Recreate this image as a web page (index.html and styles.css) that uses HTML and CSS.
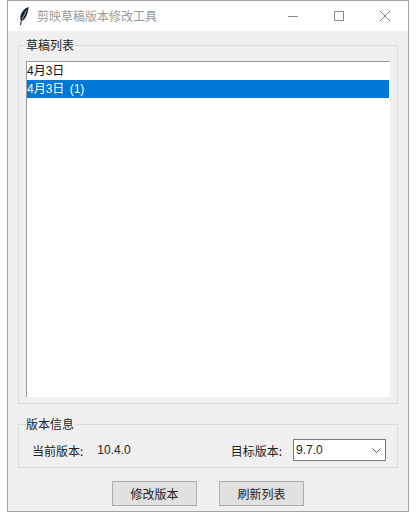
FILE: index.html
```html
<!DOCTYPE html>
<html lang="zh-CN">
<head>
<meta charset="UTF-8" />
<title>剪映草稿版本修改工具</title>
<link rel="stylesheet" href="styles.css">
</head>
<body>
  <div class="window">
    <!-- Title bar -->
    <div class="titlebar">
      <svg class="feather" width="10" height="20" viewBox="0 0 10 20">
        <path d="M9.500 1 C6 2 2.500 5.500 1.500 10 C1.200 11.500 1.200 13 1.800 14.300 L1 19 L2 19.200 L2.800 14.800 C5 14.500 7 11.500 8.200 8 C9 5.500 9.600 3 9.500 1 Z" fill="#1c2530"/>
        <path d="M7.500 4.500 L3 13.500" stroke="#8fa3b8" stroke-width="1" fill="none"/>
      </svg>
      <span class="title">剪映草稿版本修改工具</span>
      <div class="controls">
        <svg width="46" height="31" viewBox="0 0 46 31"><path d="M18 15.500 H28" stroke="#8a8a8a"/></svg>
        <svg width="46" height="31" viewBox="0 0 46 31"><rect x="18.500" y="10.500" width="9" height="9" fill="none" stroke="#8a8a8a"/></svg>
        <svg width="46" height="31" viewBox="0 0 46 31"><path d="M18 10 L28 20 M28 10 L18 20" stroke="#8a8a8a" fill="none"/></svg>
      </div>
    </div>

    <div class="content">
      <!-- Draft list -->
      <fieldset class="group group-list">
        <legend>草稿列表</legend>
        <div class="listbox">
          <div class="row">4月3日</div>
          <div class="row selected">4月3日 (1)</div>
        </div>
      </fieldset>

      <!-- Version info -->
      <fieldset class="group group-info">
        <legend>版本信息</legend>
        <div class="info-row">
          <span class="label">当前版本:</span>
          <span class="current">10.4.0</span>
          <span class="label target">目标版本:</span>
          <div class="combo">
            <span>9.7.0</span>
            <svg width="9" height="5" viewBox="0 0 9 5"><path d="M0.500 0.500 L4.500 4.500 L8.500 0.500" stroke="#555" fill="none"/></svg>
          </div>
        </div>
      </fieldset>

      <div class="buttons">
        <button class="btn">修改版本</button>
        <button class="btn">刷新列表</button>
      </div>
    </div>
  </div>
</body>
</html>
```

FILE: styles.css
```css
* {
  margin: 0;
  padding: 0;
  box-sizing: border-box;
}
body {
  background: #fff;
  font-family: "Noto Sans CJK SC", "Liberation Sans", sans-serif;
  font-size: 12px;
  color: #222;
  padding: 0 7px;
  height: 519px;
  overflow: hidden;
}
.window {
  width: 402px;
  height: 512px;
  border: 1px solid #a3a3a3;
  background: #f0f0f0;
}

/* Title bar */
.titlebar {
  display: flex;
  align-items: center;
  height: 30px;
  background: #fff;
  padding-left: 11px;
}
.feather {
  flex: none;
}
.title {
  margin-left: 8px;
  margin-bottom: 1px;
  color: #9a9a9a;
  font-size: 12px;
}
.controls {
  display: flex;
  margin-left: auto;
}

/* Groups */
.content {
  padding: 6px 10px 0;
}
.group {
  border: 1px solid #dcdcdc;
  padding: 0 7px;
}
.group legend {
  margin-left: 0;
  padding: 0;
  line-height: 16px;
  color: #222;
}
.group-list {
  height: 367px;
  padding-top: 8px;
  padding-bottom: 6px;
}
.listbox {
  height: 336px;
  background: #fff;
  border-top: 1px solid #9a9a9a;
  border-left: 1px solid #9a9a9a;
  padding-right: 1px;
}
.row {
  height: 18px;
  line-height: 18px;
  font-family: "Liberation Sans", "Noto Sans CJK SC", sans-serif;
  word-spacing: 2px;
  color: #111;
}
.row.selected {
  background: #0078d7;
  color: #fff;
}

.group-info {
  height: 52px;
  margin-top: 12px;
}
.info-row {
  display: flex;
  align-items: center;
  height: 22px;
  margin-top: 7px;
  padding-left: 6px;
}
.current {
  margin-left: 14px;
  font-family: "Liberation Sans", sans-serif;
}
.target {
  margin-left: auto;
}
.combo {
  display: flex;
  align-items: center;
  justify-content: space-between;
  width: 93px;
  height: 22px;
  margin-left: 11px;
  margin-right: 4px;
  padding: 0 4px 0 2px;
  background: #fff;
  border: 1px solid #7a7a7a;
  font-family: "Liberation Sans", sans-serif;
  font-size: 12px;
}

/* Buttons */
.buttons {
  display: flex;
  justify-content: center;
  gap: 22px;
  margin-top: 13px;
}
.btn {
  width: 85px;
  height: 25px;
  background: #e1e1e1;
  border: 1px solid #adadad;
  font-family: inherit;
  font-size: 12px;
  color: #222;
}
```
